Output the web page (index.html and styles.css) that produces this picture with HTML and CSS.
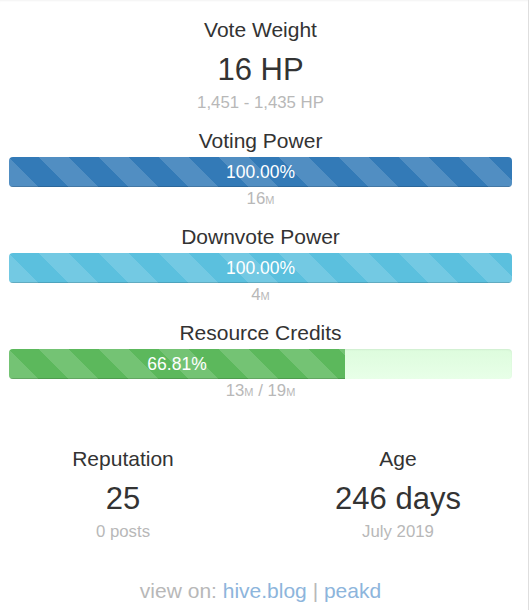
FILE: index.html
```html
<!DOCTYPE html>
<html lang="en">
<head>
<meta charset="utf-8">
<title>Account stats</title>
<link rel="stylesheet" href="styles.css">
</head>
<body>
<div class="panel">
  <div class="stat stat-top">
    <div class="title">Vote Weight</div>
    <div class="big">16 HP</div>
    <div class="sub">1,451 - 1,435 HP</div>
  </div>

  <div class="meter">
    <div class="title">Voting Power</div>
    <div class="progress">
      <div class="bar bar-primary" style="width:100%">100.00%</div>
    </div>
    <div class="sub">16<span class="unit">M</span></div>
  </div>

  <div class="meter">
    <div class="title">Downvote Power</div>
    <div class="progress">
      <div class="bar bar-info" style="width:100%">100.00%</div>
    </div>
    <div class="sub">4<span class="unit">M</span></div>
  </div>

  <div class="meter">
    <div class="title">Resource Credits</div>
    <div class="progress progress-rc">
      <div class="bar bar-success" style="width:66.81%">66.81%</div>
    </div>
    <div class="sub">13<span class="unit">M</span> / 19<span class="unit">M</span></div>
  </div>

  <div class="pair">
    <div class="stat">
      <div class="title">Reputation</div>
      <div class="big">25</div>
      <div class="sub">0 posts</div>
    </div>
    <div class="stat">
      <div class="title">Age</div>
      <div class="big">246 days</div>
      <div class="sub">July 2019</div>
    </div>
  </div>

  <div class="footer">view on: <a href="#" class="link">hive.blog</a> | <a href="#" class="link">peakd</a></div>
</div>
</body>
</html>
```

FILE: styles.css
```css
html, body {
  margin: 0;
  padding: 0;
  background: #fff;
}

body {
  font-family: "Liberation Sans", Arial, sans-serif;
  color: #333;
}

.panel {
  width: 521px;
  padding: 0 7px 12px 0;
  border-right: 1px solid #dedede;
  box-shadow: inset 0 2px 2px -1px rgba(0, 0, 0, 0.05);
  text-align: center;
}

.stat-top {
  padding-top: 18px;
}

.title {
  font-size: 21px;
  line-height: 24px;
}

.big {
  font-size: 31px;
  line-height: 34px;
  margin-top: 11px;
}

.sub {
  font-size: 16.8px;
  line-height: 20px;
  height: 20px;
  color: #b8b8b8;
}

.stat .sub {
  margin-top: 6px;
}

.unit {
  font-size: 11px;
  line-height: 1;
}

.meter {
  margin-top: 16px;
}

.progress {
  margin: 4px 9px 2px;
  height: 30px;
  border-radius: 4px;
  overflow: hidden;
  background: #f5f5f5;
  display: flex;
}

.progress-rc {
  background: linear-gradient(#ddfcdd, #e8ffe8);
  box-shadow: inset 0 1px 2px rgba(0, 0, 0, 0.06);
}

.bar {
  height: 30px;
  line-height: 30px;
  font-size: 17.5px;
  color: #fff;
  box-shadow: inset 0 -1px 0 rgba(0, 0, 0, 0.15);
  background-image: linear-gradient(45deg,
    rgba(255, 255, 255, 0.15) 25%, transparent 25%, transparent 50%,
    rgba(255, 255, 255, 0.15) 50%, rgba(255, 255, 255, 0.15) 75%, transparent 75%, transparent);
  background-size: 60px 60px;
  background-position: 30px 0;
}

.bar-primary {
  background-color: #337ab7;
}

.bar-info {
  background-color: #5bc0de;
}

.bar-success {
  background-color: #5cb85c;
}

.pair {
  display: grid;
  grid-template-columns: 246px 246px;
  column-gap: 29px;
  margin-top: 46px;
}

.footer {
  margin-top: 37px;
  font-size: 21px;
  line-height: 24px;
  color: #b8b8b8;
}

.link {
  color: #8db5dc;
  text-decoration: none;
}
```
